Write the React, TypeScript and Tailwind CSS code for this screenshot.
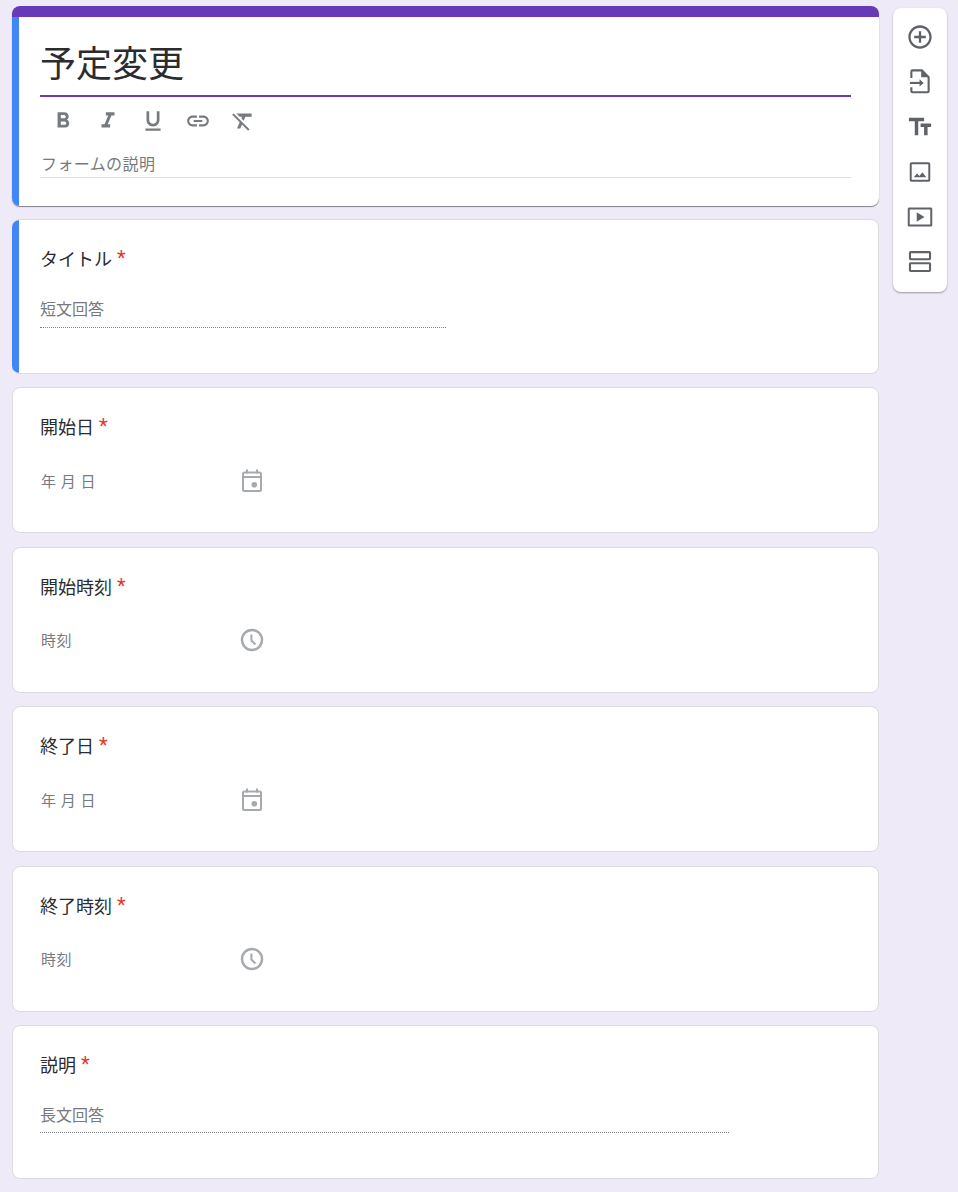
import React from 'react';

const font = { fontFamily: 'Roboto, "Noto Sans CJK JP", sans-serif' };

function Icon({ d, className, size = 24 }: { d: string; className?: string; size?: number }) {
  return (
    <svg width={size} height={size} viewBox="0 0 24 24" fill="currentColor" className={className}>
      <path d={d} />
    </svg>
  );
}

const paths = {
  bold: 'M15.6 10.79c.97-.67 1.65-1.77 1.65-2.79 0-2.26-1.75-4-4-4H7v14h7.04c2.09 0 3.71-1.7 3.71-3.79 0-1.52-.86-2.82-2.15-3.42zM10 6.5h3c.83 0 1.5.67 1.5 1.5s-.67 1.5-1.5 1.5h-3v-3zm3.5 9H10v-3h3.5c.83 0 1.5.67 1.5 1.5s-.67 1.5-1.5 1.5z',
  italic: 'M10 4v3h2.21l-3.42 8H6v3h8v-3h-2.21l3.42-8H18V4z',
  underline: 'M12 17c3.31 0 6-2.69 6-6V3h-2.5v8c0 1.93-1.57 3.5-3.5 3.5S8.5 12.93 8.5 11V3H6v8c0 3.31 2.69 6 6 6zm-7 2v2h14v-2H5z',
  link: 'M3.9 12c0-1.71 1.39-3.1 3.1-3.1h4V7H7c-2.76 0-5 2.24-5 5s2.24 5 5 5h4v-1.9H7c-1.71 0-3.1-1.39-3.1-3.1zM8 13h8v-2H8v2zm9-6h-4v1.9h4c1.71 0 3.1 1.39 3.1 3.1s-1.39 3.1-3.1 3.1h-4V17h4c2.76 0 5-2.24 5-5s-2.24-5-5-5z',
  clear: 'M3.27 5L2 6.27l6.97 6.97L6.5 19h3l1.57-3.66L16.73 21 18 19.73 3.55 5.27 3.27 5zM6 5v.18L8.82 8h2.4l-.72 1.68 2.1 2.1L14.21 8H20V5H6z',
  add: 'M13 7h-2v4H7v2h4v4h2v-4h4v-2h-4V7zm-1-5C6.48 2 2 6.48 2 12s4.48 10 10 10 10-4.48 10-10S17.52 2 12 2zm0 18c-4.41 0-8-3.59-8-8s3.59-8 8-8 8 3.59 8 8-3.59 8-8 8z',
  text: 'M2.5 4v3h5v12h3V7h5V4h-13zm19 5h-9v3h3v7h3v-7h3V9z',
};

function CalendarIcon() {
  return (
    <svg width="28" height="28" viewBox="0 0 28 28" fill="none" stroke="currentColor" strokeWidth="2" className="text-[#a6a9ad]">
      <rect x="5" y="5.5" width="18" height="18.5" rx="1.5" />
      <path d="M5 10h18M9 2.5v4M19 2.5v4" />
      <circle cx="16.3" cy="17.7" r="2.8" fill="currentColor" stroke="none" />
    </svg>
  );
}

function ClockIcon() {
  return (
    <svg width="28" height="28" viewBox="0 0 28 28" fill="none" stroke="currentColor" strokeWidth="2.4" className="text-[#a6a9ad]">
      <circle cx="14" cy="14" r="10" />
      <path d="M13.4 8.5v6l4 4" strokeWidth="2" />
    </svg>
  );
}

function ImportIcon() {
  return (
    <svg width="28" height="28" viewBox="0 0 24 24" fill="none" stroke="currentColor" strokeWidth="1.8">
      <path d="M4.6 8.5V3c0-.6.4-1 1-1h8l5.8 5.8v12c0 .6-.4 1-1 1H5.6c-.6 0-1-.4-1-1v-3.3" />
      <path d="M13 2v6h6.4z" fill="currentColor" stroke="none" />
      <path d="M3.4 12.8h10" />
      <path d="M11.6 9.7v6.2l3.6-3.1z" fill="currentColor" stroke="none" />
    </svg>
  );
}

function ImageIcon() {
  return (
    <svg width="28" height="28" viewBox="0 0 24 24" fill="currentColor">
      <path d="M19.2 3.6H4.8c-.9 0-1.6.7-1.6 1.6v13.6c0 .9.7 1.6 1.6 1.6h14.4c.9 0 1.6-.7 1.6-1.6V5.2c0-.9-.7-1.6-1.6-1.6zm-.1 15.1H4.9V5.3h14.2v13.4z" />
      <path d="M6.6 16.6l2.9-3.4 2 2.2 2.5-3.2 3.4 4.4z" />
    </svg>
  );
}

function VideoIcon() {
  return (
    <svg width="28" height="28" viewBox="0 0 24 24" fill="currentColor">
      <path d="M21.2 3.8H2.8c-.8 0-1.3.5-1.3 1.3v13.8c0 .8.5 1.3 1.3 1.3h18.4c.8 0 1.3-.5 1.3-1.3V5.1c0-.8-.5-1.3-1.3-1.3zm-.4 14.7H3.2v-13h17.6v13z" />
      <path d="M9.2 8v8l6.6-4z" />
    </svg>
  );
}

function SectionIcon() {
  return (
    <svg width="28" height="28" viewBox="0 0 24 24" fill="none" stroke="currentColor" strokeWidth="1.8">
      <rect x="3.4" y="3.5" width="17.2" height="6.2" rx="0.6" />
      <rect x="3.4" y="13.1" width="17.2" height="6.6" rx="0.6" />
    </svg>
  );
}

function Label({ text }: { text: string }) {
  return (
    <div className="flex items-start text-[18px] leading-[24px] text-[#2b2c2f]">
      <span>{text}</span>
      <span className="ml-[5px] -mt-[2px] text-[20px] text-[#e5382d]">*</span>
    </div>
  );
}

function DateTimeCard({ label, hint, kind, className }: { label: string; hint: string; kind: 'date' | 'time'; className?: string }) {
  return (
    <div className={`h-[146px] rounded-lg bg-white border border-[#dadce0] pl-[27px] pt-[28px] ${className || ''}`}>
      <Label text={label} />
      <div className="mt-[29px] ml-px flex items-center h-[24px] w-[225px] justify-between">
        <span className={`text-[15px] text-[#777a7e] tracking-[0.5px] ${kind === 'date' ? 'pt-[2px]' : ''}`}>{hint}</span>
        <div className={kind === 'time' ? '-mt-[2px]' : ''}>
          {kind === 'date' ? <CalendarIcon /> : <ClockIcon />}
        </div>
      </div>
    </div>
  );
}

export default function App() {
  return (
    <div className="min-h-[1192px] bg-[#eeeaf8] flex items-start" style={font}>
      <div className="w-[867px] ml-[12px] mt-[6px] flex flex-col gap-[13px]">
        <div className="h-[200px] rounded-lg bg-white overflow-hidden shadow-[0_1px_1px_rgba(0,0,0,0.45)]">
          <div className="h-[11px] bg-[#673ab7]" />
          <div className="h-[189px] border-l-[7px] border-[#4285f4] pl-[21px] pr-[28px]">
            <div className="h-[80px] border-b-2 border-[#673ab7] pt-[21px] text-[36px] leading-[54px] text-[#2b2c2f]">
              予定変更
            </div>
            <div className="flex items-center h-[47px] pl-[10px] gap-[19px] text-[#777a7e]">
              <Icon d={paths.bold} size={26} />
              <Icon d={paths.italic} size={26} />
              <Icon d={paths.underline} size={26} />
              <Icon d={paths.link} size={26} />
              <Icon d={paths.clear} size={26} />
            </div>
            <div className="h-[34px] border-b border-[#dadce0] pl-px pt-[9px] text-[16px] leading-[24px] tracking-[0.4px] text-[#777a7e]">
              フォームの説明
            </div>
          </div>
        </div>

        <div className="h-[155px] rounded-lg bg-white border-y border-r border-[#dadce0] overflow-hidden">
          <div className="h-full border-l-[7px] border-[#4285f4] pl-[21px] pt-[28px]">
            <Label text="タイトル" />
            <div className="mt-[26px] h-[30px] w-[406px] border-b border-dotted border-[#80868b] text-[16px] leading-[24px] text-[#777a7e]">
              短文回答
            </div>
          </div>
        </div>

        <DateTimeCard label="開始日" hint="年 月 日" kind="date" />
        <DateTimeCard label="開始時刻" hint="時刻" kind="time" className="mt-px" />
        <DateTimeCard label="終了日" hint="年 月 日" kind="date" />
        <DateTimeCard label="終了時刻" hint="時刻" kind="time" className="mt-px" />

        <div className="h-[154px] rounded-lg bg-white border border-[#dadce0] pl-[27px] pt-[28px]">
          <Label text="説明" />
          <div className="mt-[26px] h-[29px] w-[689px] border-b border-dotted border-[#80868b] text-[16px] leading-[24px] text-[#777a7e]">
            長文回答
          </div>
        </div>
      </div>

      <div className="ml-[14px] mt-[8px] w-[54px] h-[284px] rounded-lg bg-white shadow-[0_1px_2px_rgba(0,0,0,0.35)] flex flex-col items-center pt-[15px] gap-[17px] text-[#5f6368]">
        <Icon d={paths.add} size={28} />
        <ImportIcon />
        <Icon d={paths.text} size={28} />
        <ImageIcon />
        <VideoIcon />
        <SectionIcon />
      </div>
    </div>
  );
}
